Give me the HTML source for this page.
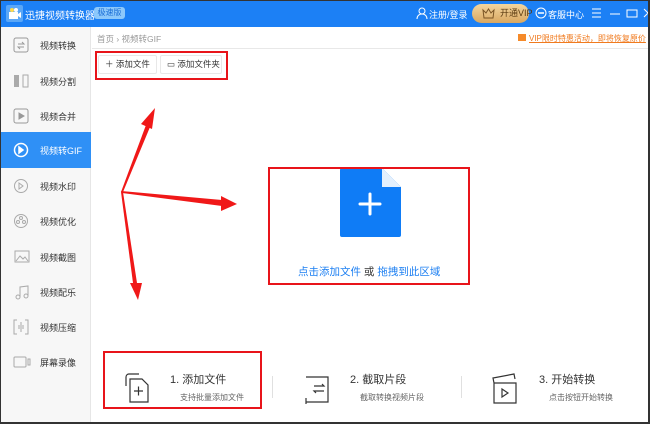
<!DOCTYPE html>
<html><head><meta charset="utf-8"><style>
*{margin:0;padding:0;box-sizing:border-box}
body{width:650px;height:424px;overflow:hidden;background:#fff;font-family:"Liberation Sans","Noto Sans CJK SC",sans-serif;position:relative}
.a{position:absolute;white-space:nowrap}
.top{left:0;top:0;width:650px;height:27px;background:#1c80f5}
.side{left:0;top:27px;width:91px;height:397px;background:#f7f7f7;border-right:1px solid #e6e6e6}
.item{position:absolute;left:0;width:91px;height:36px;font-size:9px;color:#333}
.item span{position:absolute;left:40px;top:12px}
.item svg{position:absolute;left:13px;top:10px}
.act{background:#2f90f6;color:#fff}
.btn{position:absolute;top:55px;height:19px;border:1px solid #e8e8e8;border-radius:2px;font-size:8.5px;color:#333;line-height:17px;background:#fff;white-space:nowrap}
.red{position:absolute;border:2px solid #e8141a}
</style></head><body>
<div class="a top">
  <svg class="a" style="left:6px;top:5px" width="17" height="17"><rect x="0" y="0" width="17" height="17" rx="2" fill="#5aa7f7"/><rect x="3" y="7" width="9" height="7" fill="#fff"/><circle cx="6" cy="5" r="2" fill="#ffd94a"/><circle cx="10" cy="5" r="2" fill="#fff"/><path d="M12 9l3-2v6l-3-2z" fill="#fff"/></svg>
  <div class="a" style="left:25px;top:7px;color:#fff;font-size:10px">迅捷视频转换器</div>
  <div class="a" style="left:94px;top:7px;width:31px;height:12px;background:#8cc8fb;border-radius:3px;color:#1c6fd6;font-size:8px;text-align:center;line-height:12px">极速版</div>
  <svg class="a" style="left:416px;top:7px" width="12" height="13" fill="none" stroke="#fff" stroke-width="1"><circle cx="6" cy="4" r="3"/><path d="M1 12c0-3 2-5 5-5s5 2 5 5"/></svg>
  <div class="a" style="left:429px;top:8px;color:#fff;font-size:9px">注册/登录</div>
  <div class="a" style="left:472px;top:4px;width:57px;height:19px;border-radius:10px;background:linear-gradient(#f3d59e,#d9a760);color:#5a3a10;font-size:9px;line-height:19px;padding-left:28px">开通VIP</div>
  <svg class="a" style="left:482px;top:8px" width="13" height="11" fill="none" stroke="#7a5424" stroke-width="1"><path d="M1 2l3 3 2.5-4 2.5 4 3-3-1 8H2z"/></svg>
  <svg class="a" style="left:535px;top:7px" width="12" height="12" fill="none" stroke="#fff"><circle cx="6" cy="6" r="5"/><circle cx="4" cy="6" r=".5" fill="#fff"/><circle cx="6" cy="6" r=".5" fill="#fff"/><circle cx="8" cy="6" r=".5" fill="#fff"/></svg>
  <div class="a" style="left:548px;top:8px;color:#fff;font-size:9px">客服中心</div>
  <svg class="a" style="left:592px;top:8px" width="58" height="11" stroke="#fff" fill="none" stroke-width="1"><path d="M0 1h9M0 5h9M0 9h9M18 6h10M35 2h10v7H35zM52 1l8 8M60 1l-8 8"/></svg>
</div>
<div class="a side">
  <div class="item" style="top:0"><svg width="18" height="16" fill="none" stroke="#999"><rect x="1" y="1" width="14" height="14" rx="2"/><path d="M5 7h6l-2-2M11 10H5l2 2"/></svg><span>视频转换</span></div>
  <div class="item" style="top:36px"><svg width="18" height="16" fill="#aaa"><rect x="1" y="2" width="5" height="12"/><rect x="10" y="2" width="5" height="12" fill="none" stroke="#aaa"/></svg><span>视频分割</span></div>
  <div class="item" style="top:71px"><svg width="18" height="16" fill="none" stroke="#999"><rect x="1" y="1" width="14" height="14" rx="2"/><path d="M6 5l5 3-5 3z" fill="#999"/></svg><span>视频合并</span></div>
  <div class="item act" style="top:105px"><svg width="18" height="16" fill="none" stroke="#fff" stroke-width="1.5"><circle cx="8" cy="8" r="6.5"/><path d="M6 5l4 3-4 3z" fill="#fff"/></svg><span>视频转GIF</span></div>
  <div class="item" style="top:141px"><svg width="18" height="16" fill="none" stroke="#aaa"><circle cx="8" cy="8" r="6.5"/><path d="M6 5l4 3-4 3z"/></svg><span>视频水印</span></div>
  <div class="item" style="top:176px"><svg width="18" height="16" fill="none" stroke="#aaa"><circle cx="8" cy="8" r="6.5"/><circle cx="8" cy="5" r="1.5"/><circle cx="5" cy="9" r="1.5"/><circle cx="11" cy="9" r="1.5"/></svg><span>视频优化</span></div>
  <div class="item" style="top:212px"><svg width="18" height="16" fill="none" stroke="#aaa"><rect x="2" y="2" width="14" height="11"/><path d="M3 12l4-5 3 3 2-2 3 4"/></svg><span>视频截图</span></div>
  <div class="item" style="top:247px"><svg width="18" height="16" fill="none" stroke="#aaa"><path d="M7 13V3l8-1v10"/><circle cx="5" cy="13" r="2"/><circle cx="13" cy="12" r="2"/></svg><span>视频配乐</span></div>
  <div class="item" style="top:282px"><svg width="18" height="16" fill="none" stroke="#aaa"><path d="M4 1H1v14h3M12 1h3v14h-3M5 7h6M5 9h6M8 3v3M8 10v3"/></svg><span>视频压缩</span></div>
  <div class="item" style="top:317px"><svg width="18" height="16" fill="none" stroke="#aaa"><rect x="1" y="3" width="12" height="10" rx="1"/><rect x="15" y="5" width="2" height="6"/></svg><span>屏幕录像</span></div>
</div>
<div class="a" style="left:97px;top:33px;font-size:8.5px;color:#999">首页 › 视频转GIF</div>
<div class="a" style="left:92px;top:48px;width:558px;height:1px;background:#e8e8e8"></div>
<div class="a" style="left:518px;top:33px;font-size:8px;color:#f07a1e;text-decoration:underline"><span style="display:inline-block;width:8px;height:7px;background:#f58a2a;margin-right:3px"></span>VIP限时特惠活动，即将恢复原价</div>
<div class="btn" style="left:98px;width:59px;padding-left:6px">＋ 添加文件</div>
<div class="btn" style="left:160px;width:62px;padding-left:6px">▭ 添加文件夹</div>
<div class="red" style="left:95px;top:51px;width:133px;height:29px"></div>

<svg class="a" style="left:0;top:0" width="650" height="424">
<g fill="#f01818">
<polygon points="121,192 146,125 150,127 123,192"/><polygon points="155,108 141,124 152,129"/>
<polygon points="121,191 222,200 222,206 122,193"/><polygon points="237,204 221,196 221,211"/>
<polygon points="121,192 133,283 137,283 123,192"/><polygon points="138,300 130,283 142,283"/>
</g>
<path d="M342 168h40l19 19v48a2 2 0 0 1-2 2h-57a2 2 0 0 1-2-2v-65a2 2 0 0 1 2-2z" fill="#0f7cf6"/>
<path d="M382 168l19 19h-19z" fill="#e4f0fd"/>
<path d="M370 194v20M360 204h20" stroke="#fff" stroke-width="3" stroke-linecap="round"/>
<g fill="none" stroke="#333" stroke-width="1.2">
<path d="M126 386v-9a3 3 0 0 1 3-3h10"/><path d="M130 379h12l6 6v17h-18z"/><path d="M134 391h9M138.5 386.5v9"/>
<path d="M306 377h22v25h-22M306 398v6M314 386h10l-2-2M324 391h-10l2 2"/>
<path d="M494 383h22v20h-22zM494 383l-1-5 21-4 1 5"/><path d="M502 389l6 4-6 4z"/>
</g>
</svg>
<div class="red" style="left:268px;top:167px;width:202px;height:118px"></div>
<div class="a" style="left:298px;top:264px;font-size:10.5px;color:#1c7ff2">点击添加文件 <span style="color:#333">或</span> 拖拽到此区域</div>

<div class="a" style="left:272px;top:376px;width:1px;height:22px;background:#e0e0e0"></div>
<div class="a" style="left:461px;top:376px;width:1px;height:22px;background:#e0e0e0"></div>
<div class="a" style="left:170px;top:371px;font-size:11px;color:#333">1. 添加文件</div>
<div class="a" style="left:180px;top:392px;font-size:8px;color:#666">支持批量添加文件</div>
<div class="a" style="left:350px;top:371px;font-size:11px;color:#333">2. 截取片段</div>
<div class="a" style="left:360px;top:392px;font-size:8px;color:#666">截取转换视频片段</div>
<div class="a" style="left:539px;top:371px;font-size:11px;color:#333">3. 开始转换</div>
<div class="a" style="left:549px;top:392px;font-size:8px;color:#666">点击按钮开始转换</div>
<div class="red" style="left:103px;top:351px;width:159px;height:58px"></div>
<div class="a" style="left:0;top:0;width:650px;height:424px;border:1px solid #333;border-right-width:2px;border-bottom-width:2px;pointer-events:none"></div>
</body></html>
